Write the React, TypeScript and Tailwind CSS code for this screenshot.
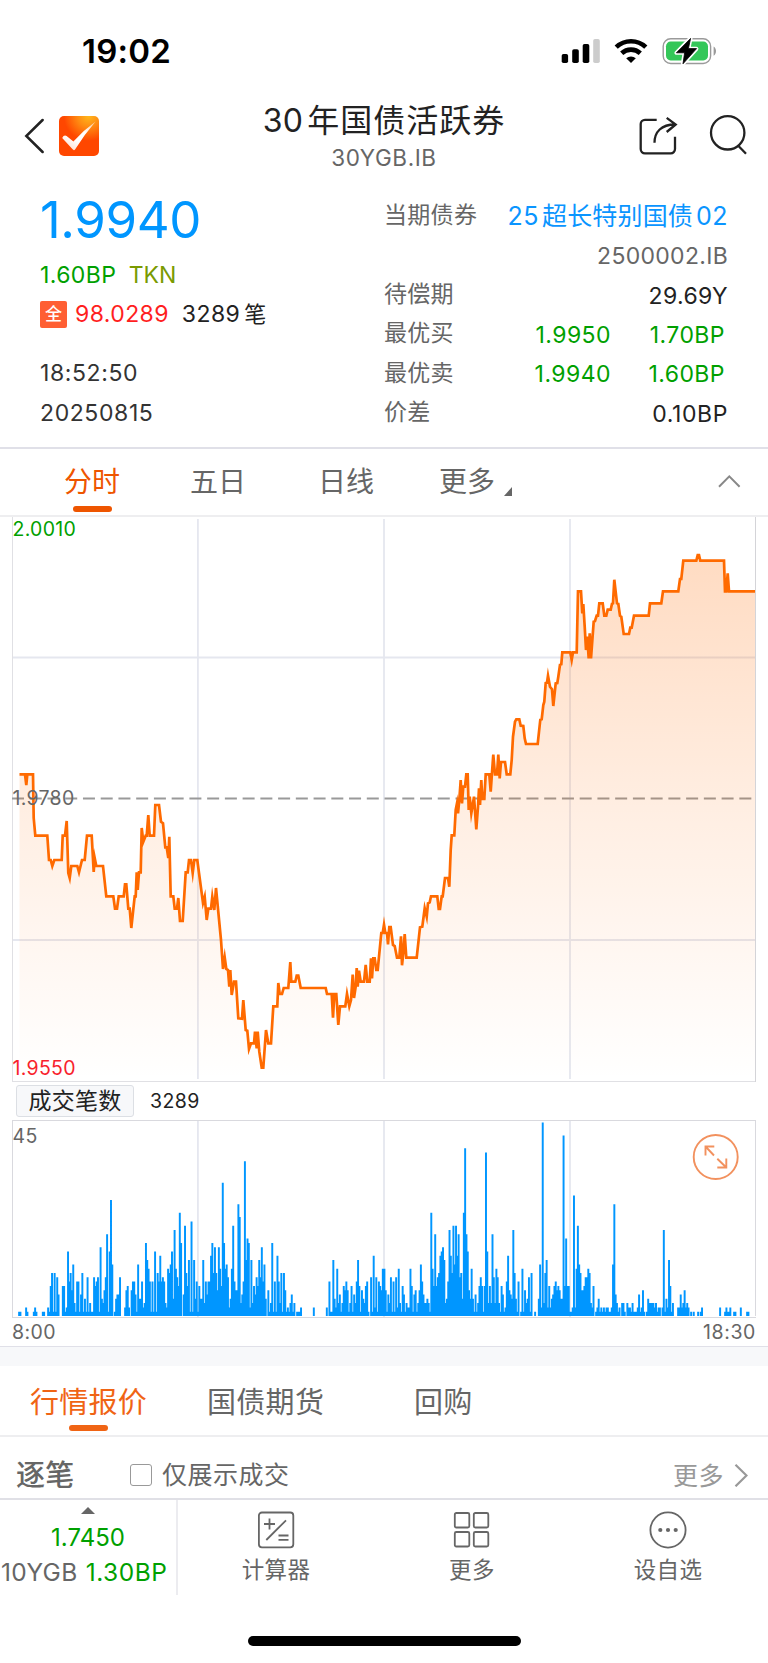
import React from "react";

const LINE =
  "19.5,774.3 25,774.3 26.3,785 27.3,774.3 33,774.3 33.7,818 35.3,835.7 47.3,835.7 49,860 50.7,860 52.3,866 54.3,860 61.7,860 62.7,835.7 65,835.7 66.7,821 68.3,873 69.7,878 71.3,866 77.3,866 79,872.3 82,860 84.7,860 87,835.7 91.7,835.7 93.7,872 94.7,858 96.3,866 103,866 106.3,896.3 113.3,896.3 115,908.7 117,908.7 118.7,896.3 123.7,896.3 125,884.3 126.3,884.3 128.3,908.7 129.7,908.7 131.3,928 134.7,896.3 135.7,896.3 136.7,872.3 137.7,890 139,872.3 140.7,872.3 141.7,828 143.3,841.7 145.7,835.7 146.7,835.7 148.3,815 149.7,835.7 154,835.7 155.3,805 159,805 161,821.7 163,823.3 165.3,847.3 166.7,847.3 168.3,858 169.3,836.7 170.7,896.3 173.3,896.3 174.7,908.7 177,908.7 178.3,898 180,921 182.7,921 185.7,872.3 187.7,872.3 189,860 191,860 192.7,873 194.3,860 197.3,860 199,873 203,903 204.7,896.7 206.7,920 208.3,908.7 211,908.7 212.3,896.7 214.3,910 216,888 221,940 223,969 224.7,957.3 226.3,969 228,970 229.3,986.7 230.3,970 231.7,995 234,981.7 236,981.7 238.3,1018.3 242,1018.7 243.3,1000 245.7,1030 247.3,1030.7 249,1049 251,1043.3 254,1043.3 255,1031.7 256.7,1048.3 257.7,1031.7 259.3,1051.7 261.7,1067.7 263.3,1067.7 266,1030 268.3,1043.3 271,1043.3 273.3,1006.3 277.3,1006.3 278.3,983 279.7,994 282,994 283.7,988 288.3,988 290.3,962 291.3,981.7 295.3,981.7 296.7,975.7 298.3,975.7 300.7,988 325.7,988 327,994 331.7,994 333,1017.7 334.3,994 336.3,994 338.3,1025 340,1006.3 345.3,1006.3 347,994 349.3,1006.3 351,1000 352.7,974.7 354,998 355.7,986.7 356.7,968 357.7,986.7 359,970.7 360.7,981.7 364,981.7 365.7,965 367.3,981.7 369.7,981.7 371,958.3 372,978.3 373.3,958.3 374.7,958.3 376.3,970 377.7,970 381.3,933 382.7,933 384,924.7 385.3,933 387,933 388,944.3 389.3,927 390.7,927 393,945 394.7,946 397,957.7 399.3,957.7 401,936.3 402,965.3 403.3,953.3 404.7,934 406.3,957.7 416.7,957.7 420,927.3 422.3,926.7 424.7,908.3 426.7,916.7 428,903.3 429.7,902.3 431,896.3 437.3,896.3 438.7,909 440,909 441.7,896.3 442.7,896.3 445,878 448,878 449.3,886.7 450.7,850 451.7,835.3 454.3,835.3 455.7,810 457,803.3 458,813.3 459.3,800 460.7,780 462,803.3 463.3,786.7 465,786.7 466.3,774.3 467.7,774.3 468.7,810 469.7,796.7 471.3,813.3 472.7,805 474,796.7 476.3,829.3 478,806.7 479,788.3 480,805 481.3,780 482.3,799 484.3,799 485.7,774.3 489.3,774.3 490.7,791.7 492.3,768.3 493.3,754.7 495,774.3 497,774.3 498.3,754.7 499.7,778.3 501,762 505,762 506.7,774.3 510.3,774.3 511.7,760 513,736.7 515,721.7 516.3,719.3 519.3,719.3 520.7,725.7 523.3,726 524.7,738.3 526,744 537.7,744 540.3,719.7 541.7,719.3 543.3,705 544.3,701.7 545.7,683 547,682.7 548,675.7 550,686.7 552,689.3 553.3,706 555.7,683.3 557.3,683 558.3,676.7 560,664.7 561.3,664.3 562.3,652.3 570.3,652.3 571.7,660 573,652.3 576.7,652.3 578,591.3 581,591.3 582.3,613.3 583.3,604 584.7,626.7 586,650 587.3,636.7 588.7,658.3 589.7,633.3 591,658.3 593.7,621.7 595,621 596.7,615.7 598,615.7 599.3,603.3 602.7,603.3 604.3,615.7 606.3,615.7 607.7,609.7 610.7,609.7 612,603.7 613,603.3 614.3,579.7 617,603.3 618.3,603.7 620,615.7 621.3,616.7 623.7,634 629,634 630.3,627.7 631.7,627.7 634,615.7 648.7,615.7 650,603.3 661.3,603.3 663,591.3 678.3,591.3 680,579 681.3,579 683.3,560.7 696.3,560.7 697.7,555 699,555 700.3,560.7 724,560.7 725,591.3 726.3,591.3 727.7,573.3 729,591.3 755,591.3";

/* Runs of per-interval trade counts: [x of the first bar, counts]. */
const VOLUME: [number, number[]][] = [
  [19, [1, 1]],
  [26, [2, 1]],
  [33.7, [1, 2, 1]],
  [42.7, [1, 1]],
  [48, [2, 1, 7, 10, 1, 10, 1, 9, 5]],
  [62.7, [7, 7, 1, 2, 15, 8, 10, 6, 12, 3, 1, 8, 8, 1, 5, 10, 1, 4, 1, 9, 1, 3, 1, 1, 9, 7, 8, 9, 1, 16, 4, 3, 6, 9, 19, 1, 15, 27, 12]],
  [114.7, [1, 4, 5, 5, 9]],
  [125, [2, 6, 7, 2, 0, 6, 8, 8, 5, 1, 12, 4, 4, 8, 2, 3, 17, 13, 11, 8, 1, 8, 1, 15, 1, 10, 8, 14, 8, 9, 8, 3, 2, 11, 10, 12, 15, 4, 20, 11, 9, 7, 24, 17, 0, 5, 21, 10, 7, 13, 1, 22, 1, 13, 4, 8, 1, 7, 4, 4, 13, 3, 8, 5, 8, 8, 14, 17, 10, 16, 10, 6, 16, 11, 7, 31, 17, 11, 12, 9, 2, 4, 11, 21, 8, 6, 6, 26, 23, 3, 5, 8, 36, 13, 18, 17, 2, 13, 3, 7, 5, 9, 7, 13, 9, 16, 8, 12, 4, 0, 6, 1, 3, 17, 1, 8, 1, 14, 8, 3, 10, 1, 10, 6, 1, 2, 1, 3, 5, 1, 3]],
  [297, [1, 1, 1, 2]],
  [313.7, [2]],
  [326.7, [2, 0, 8, 1, 1, 13, 4, 2, 11, 3, 5, 1, 3, 7, 6, 8, 6, 1, 3, 7, 1, 5, 3, 8, 13, 7, 1, 6, 4, 3, 7, 8, 1, 0, 9, 1, 14, 2, 9, 1, 8, 7, 6, 11]],
  [384.3, [11, 6, 1, 5, 3, 9, 1, 8, 1, 9, 2, 11, 3, 1, 7, 5, 1, 3, 2, 2, 11, 7, 1, 5, 6, 1, 3, 6, 12, 8, 5, 3, 3, 4, 3, 1, 24, 11, 7, 19, 7, 9, 10, 14, 15, 16, 13, 3, 4, 8, 20, 14, 10, 21, 12, 21, 14, 19, 9, 10, 4, 24, 39, 19, 15, 6, 4, 11, 4, 1, 5, 1, 3, 7, 9, 7, 1, 7, 38, 15, 3, 7, 3, 19, 9, 3, 11, 9, 3, 1, 7, 5, 1, 2, 8, 14, 6, 5, 4, 20, 10, 4, 1, 8, 0, 1, 11, 1, 6, 3, 4, 9, 1, 10]],
  [535, [1]],
  [538.7, [4, 12, 2, 45, 3, 10, 13, 2, 7, 2, 4, 5, 7, 8, 6, 7, 6, 4, 4, 42, 7, 18, 7, 7, 1, 1, 2, 28, 2, 11, 21, 12, 10, 6, 6, 7, 9, 9, 11, 10, 3, 2, 7, 0, 1, 2, 4, 1, 2, 1, 2, 1, 2, 2, 1, 1, 2, 12, 26, 5, 3, 1, 2, 0, 3, 3, 1, 0, 3, 2, 2, 1, 3, 1, 1, 1, 2, 5, 1, 2, 6, 1, 0, 1, 4, 3, 3, 3, 3, 2, 3, 1, 2, 2, 0, 2, 20, 1, 4, 2, 13, 7, 1, 3]],
  [678, [2, 2, 5, 2, 3, 6, 2, 3, 2, 0, 1, 0, 1]],
  [698, [1, 0, 1, 2]],
  [720, [2]],
  [725, [1, 2, 1, 1, 2]],
  [734, [1, 1]],
  [740.7, [2]],
  [747, [1, 1]],
];

const volumePath = VOLUME.flatMap(([start, counts]) =>
  counts.map((c, i) =>
    c ? `M${(start + i * 1.302 - 0.85).toFixed(2)} 1316v${(-c * 4.3).toFixed(1)}h1.95V1316z` : ""
  )
).join("");

function StatusIcons() {
  return (
    <svg width="160" height="32" viewBox="560 35 160 32">
      <g>
        <rect x="561.7" y="54" width="6.4" height="9" rx="1.8" />
        <rect x="572.2" y="49.3" width="6.6" height="13.7" rx="1.8" />
        <rect x="582.7" y="44" width="6.6" height="19" rx="1.8" />
        <rect x="593.2" y="39" width="6.6" height="24" rx="1.8" fill="#ccc" />
      </g>
      <g fill="none" stroke="#000" strokeWidth="4.6">
        <path d="M616.2 47.2a21.4 21.4 0 0 1 29.6 0" />
        <path d="M621.7 53.3a13.6 13.6 0 0 1 18.600 0" />
      </g>
      <path d="M626.2 58.3a7 7 0 0 1 9.600 0l-4.800 4.800z" />
      <rect x="663.2" y="38.7" width="47.4" height="24.8" rx="7.5" fill="#fff" stroke="#9a9a9a" strokeWidth="1.4" />
      <rect x="666" y="41.6" width="42" height="18.8" rx="4.6" fill="#34c759" />
      <path d="M713.6 46.6c3.2 1.6 3.2 7.6 0 9.2z" fill="#9a9a9a" />
      <path d="M690.6 38.2 676.4 52.8h8.2l-1.8 11 13.6-15h-8z" stroke="#fff" strokeWidth="4" strokeLinejoin="round" />
      <path d="M690.6 38.4 676.4 52.8h8.2l-1.6 11 13.6-15.2h-8.2z" stroke="#000" strokeWidth=".8" strokeLinejoin="round" />
    </svg>
  );
}

function Logo() {
  return (
    <svg className="mt-[15px] ml-[15.3px]" width="40" height="40" viewBox="0 0 40 40">
      <defs>
        <radialGradient id="logoBg" cx=".74" cy="0" r=".62">
          <stop offset="0" stopColor="#ffb81c" />
          <stop offset=".45" stopColor="#ff8a12" />
          <stop offset="1" stopColor="#ff4700" />
        </radialGradient>
        <linearGradient id="logoTick" x1=".3" y1="1" x2="1" y2="0">
          <stop offset="0" stopColor="#ffe3d6" />
          <stop offset=".3" stopColor="#fff" />
          <stop offset=".6" stopColor="#fff" />
          <stop offset="1" stopColor="#ffc28a" />
        </linearGradient>
      </defs>
      <rect width="40" height="40" rx="5" fill="url(#logoBg)" />
      <path d="M3.2 22 Q5 18.4 7.6 20 L14.4 25.4 Q25 14 36.6 5.6 Q25.5 18.5 16.2 33.2 Q15 35 13.6 33.3z" fill="url(#logoTick)" />
    </svg>
  );
}

function Header() {
  return (
    <header className="flex h-[75px] justify-between text-[#222]">
      <div className="flex w-[200px] items-start">
        <svg className="mt-[17px] ml-[24px]" width="20" height="36" viewBox="24 118 20 36" fill="none" stroke="currentColor" strokeWidth="2.5">
          <path d="M42.600 120 26.300 136l16.300 16" strokeLinecap="round" />
        </svg>
        <Logo />
      </div>
      <div className="flex flex-col items-center pt-px">
        <h1 className="flex text-[32px] leading-[38px] tracking-[1px]">
          <span className="mr-[4px] tracking-[0.3px]">30</span>年国债活跃券
        </h1>
        <div className="text-[22.5px] leading-[36px] tracking-[0.6px] text-[#666]">30YGB.IB</div>
      </div>
      <div className="flex w-[200px] items-start justify-end pr-5">
        <svg className="mt-[13px]" width="110" height="44" viewBox="638 114 110 44" fill="none" stroke="currentColor" strokeWidth="2.3">
          <path d="M656.700 119.800H645a4.300 4.300 0 0 0-4.300 4.300v25a4.300 4.300 0 0 0 4.300 4.300h25.700a4.300 4.300 0 0 0 4.300-4.300v-12.400" />
          <path d="M654.500 142.800c0-11 7-18.300 20.500-18.300M666.700 117.800l9 6.700-9 7.500" />
          <circle cx="727.700" cy="132.800" r="16.700" />
          <path d="m738 145.500 8 8.200" />
        </svg>
      </div>
    </header>
  );
}

function Detail({ label, children }: { label: string; children: React.ReactNode }) {
  return (
    <div className="flex h-[39.5px] items-center justify-between">
      <span className="pb-[3px] text-[23px] tracking-[0.3px] text-[#666]">{label}</span>
      {children}
    </div>
  );
}

function Best({ price, bp }: { price: string; bp: string }) {
  return (
    <span className="flex gap-[36px] pr-[3px] tracking-[0.45px] text-[#00a000]">
      <span>{price}</span>
      <span className="w-[78px] text-right">{bp}</span>
    </span>
  );
}

function Quote() {
  return (
    <section className="flex h-[271px] text-[23px] leading-[25px] tracking-[0.4px] text-[#222]">
      <div className="w-[384px] pl-[40px]">
        <div className="text-[51px] leading-[87px] tracking-[-0.4px] text-[#0096ff]">1.9940</div>
        <div className="flex gap-[12.5px]">
          <span className="text-[#00a000]">1.60BP</span>
          <span className="tracking-[-0.1px] text-[#7a9a01]">TKN</span>
        </div>
        <div className="flex h-[53px] items-center">
          <span className="flex h-[27px] w-[27px] items-center justify-center rounded-[2px] bg-[#ff5f33] text-[17px] font-medium tracking-normal text-white">全</span>
          <span className="ml-[8px] text-[#ff1e1e]">98.0289</span>
          <span className="ml-[13px]">3289</span>
          <span className="ml-[4px] text-[22px]">笔</span>
        </div>
        <div className="mt-[13px] leading-[39px] tracking-[0.6px] text-[#333]">18:52:50</div>
        <div className="leading-[40px] tracking-[0.6px] text-[#333]">20250815</div>
      </div>
      <div className="w-[344px] pt-[21px]">
        <Detail label="当期债券">
          <span className="flex text-[25px] tracking-[0.5px] text-[#0a95ff]">
            25<span className="mx-[3px] tracking-[0.15px]">超长特别国债</span>02
          </span>
        </Detail>
        <Detail label="">
          <span className="pt-px tracking-[0.3px] text-[#666]">2500002.IB</span>
        </Detail>
        <Detail label="待偿期">
          <span className="pt-px">29.69Y</span>
        </Detail>
        <Detail label="最优买">
          <Best price="1.9950" bp="1.70BP" />
        </Detail>
        <Detail label="最优卖">
          <Best price="1.9940" bp="1.60BP" />
        </Detail>
        <Detail label="价差">
          <span className="tracking-[0.6px]">0.10BP</span>
        </Detail>
      </div>
    </section>
  );
}

function PeriodTabs() {
  return (
    <nav className="flex h-[70px] border-t-2 border-b-2 border-t-[#e0e0e8] border-b-[#eeeef0] pt-[14px] text-[28px] leading-[39px] text-[#666]">
      <div className="ml-[64px] flex w-[56px] flex-col items-center text-[#ee5500]">
        分时
        <span className="mt-[4px] h-[6px] w-[39px] rounded-[3px] bg-[#ee5500]" />
      </div>
      <div className="ml-[70px] w-[56px]">五日</div>
      <div className="ml-[72px] w-[56px]">日线</div>
      <div className="ml-[65px] flex w-[74px]">
        更多
        <svg className="mt-[24px] ml-[9px]" width="8" height="9" viewBox="0 0 8 9">
          <path d="M8 0v9H0z" fill="#666" />
        </svg>
      </div>
      <svg className="mt-[10px] ml-[204px]" width="24" height="16" viewBox="717 473 24 16" fill="none" stroke="#888" strokeWidth="2">
        <path d="m719 486.700 10.300-10.400 10.300 10.400" />
      </svg>
    </nav>
  );
}

function PriceChart() {
  return (
    <section className="relative h-[565px] text-[19.5px] leading-[20px] tracking-[0.3px]">
      <svg width="768" height="565" viewBox="0 517 768 565" fill="none">
        <defs>
          <linearGradient id="area" x1="0" y1="554" x2="0" y2="1080" gradientUnits="userSpaceOnUse">
            <stop offset="0" stopColor="#ff6a00" stopOpacity=".24" />
            <stop offset=".5" stopColor="#ff6a00" stopOpacity=".11" />
            <stop offset="1" stopColor="#ff6a00" stopOpacity="0" />
          </linearGradient>
        </defs>
        <path d="M197.900 519v560M384 519v560M570 519v560M12 657.500h743M12 940h743" stroke="#e5e7ef" strokeWidth="1.800" />
        <path d="M12.500 517v565M12 1081.500h744" stroke="#e0e0e4" />
        <path d="M755.500 517v565" stroke="#d4d4d8" />
        <path d="M12 798.500h740" stroke="#999" strokeWidth="1.900" strokeDasharray="12 5.740" />
        <polygon points={`19.5,1080 ${LINE} 755,1080`} fill="url(#area)" />
        <polyline points={LINE} stroke="#ff6a00" strokeWidth="2.700" strokeLinejoin="miter" strokeMiterlimit="8" />
      </svg>
      <span className="absolute top-[2px] left-[12.5px] text-[#00a000]">2.0010</span>
      <span className="absolute top-[271px] left-[12.5px] text-[#666]">1.9780</span>
      <span className="absolute top-[541px] left-[12.5px] text-[#f8222c]">1.9550</span>
    </section>
  );
}

function VolumeChart() {
  return (
    <section className="text-[19.5px] tracking-[0.4px] text-[#666]">
      <div className="flex h-[38px] items-center pl-[16px] text-[#222]">
        <span className="flex h-[32px] w-[118px] items-center justify-center rounded-[3px] border border-[#dcdfe4] bg-[#f7f8fa] pt-px text-[23px] tracking-[0.3px]">成交笔数</span>
        <span className="ml-[16px] pt-[2px]">3289</span>
      </div>
      <div className="relative h-[198px]">
        <svg width="768" height="198" viewBox="0 1120 768 198" fill="none">
          <path d="M197.900 1121v196M384 1121v196M570 1121v196" stroke="#e5e7ef" strokeWidth="1.800" />
          <path d="M12.500 1120v198M12 1120.500h744M12 1317.500h744M755.500 1120v196" stroke="#d9d9de" />
          <path d={volumePath} fill="#0096ff" />
          <g stroke="#f2915e" strokeWidth="1.900">
            <circle cx="715.700" cy="1157" r="22" />
            <path d="M705.500 1155.500v-9h8.800M705.500 1146.500l8.500 9M726.300 1158.500v9h-9M726.300 1167.500l-9-8.800" />
          </g>
        </svg>
        <span className="absolute top-[6px] left-[12.5px] leading-[20px]">45</span>
      </div>
      <div className="flex h-[28px] items-center justify-between pt-[2px] pr-[12px] pl-[12px]">
        <span>8:00</span>
        <span className="tracking-[0.6px]">18:30</span>
      </div>
      <div className="h-[20px] border-t border-[#e0e0e8] bg-[#f7f8fa]" />
    </section>
  );
}

function MarketTabs() {
  return (
    <nav className="flex h-[71px] border-b-2 border-[#eeeef0] pt-[17px] text-[29px] leading-[39px] tracking-[0.3px] text-[#666]">
      <div className="ml-[30px] flex w-[117px] flex-col items-center text-[#f06414]">
        行情报价
        <span className="mt-[3px] h-[6px] w-[39px] rounded-[3px] bg-[#f06414]" />
      </div>
      <div className="ml-[60px] w-[118px]">国债期货</div>
      <div className="ml-[89px]">回购</div>
    </nav>
  );
}

function TickHeader() {
  return (
    <div className="flex h-[61px] pt-[18px] text-[25px] leading-[40px] tracking-[0.5px] text-[#666]">
      <span className="ml-[16px] w-[114px] pt-px text-[29px] font-medium tracking-[0.3px]">逐笔</span>
      <span className="mt-[9px] h-[22px] w-[22px] rounded-[3px] border-[1.5px] border-[#999]" />
      <span className="ml-[10px] flex-1">仅展示成交</span>
      <span className="pt-px text-[#999]">更多</span>
      <svg className="mt-[8px] mr-[20px] ml-[9px]" width="15" height="24" viewBox="733 1463 15 24" fill="none" stroke="#999" strokeWidth="2.2">
        <path d="m735.500 1464.700 11 10.800-11 10.800" />
      </svg>
    </div>
  );
}

function NavItem({ label, children }: { label: string; children: React.ReactNode }) {
  return (
    <div className="flex flex-1 flex-col items-center pt-[10px] text-[22.5px] leading-[30px] tracking-[0.4px]">
      <svg width="40" height="40" viewBox="0 0 40 40" fill="none" stroke="#666" strokeWidth="1.800">
        {children}
      </svg>
      <span className="mt-[5px]">{label}</span>
    </div>
  );
}

function BottomNav() {
  return (
    <footer className="flex h-[165px] flex-col items-center border-t-2 border-[#e0e0e6] text-[#666]">
      <div className="flex h-[95px] w-full">
        <div className="flex w-[178px] flex-col items-center border-r-2 border-[#ececf0] text-[24.5px] leading-[35px]">
          <svg className="mt-[7px]" width="14" height="7" viewBox="0 0 14 7">
            <path d="M7 0l7 7H0z" fill="#666" />
          </svg>
          <span className="mt-[6px] text-[24px] text-[#00a000]">1.7450</span>
          <span className="flex w-full pl-px">
            <span className="tracking-[0.4px]">10YGB</span>
            <span className="ml-[8px] tracking-[0.5px] text-[#00a000]">1.30BP</span>
          </span>
        </div>
        <div className="mr-[2px] flex flex-1">
          <NavItem label="计算器">
            <rect x="2.900" y="2.500" width="34.400" height="34.800" rx="3" />
            <path d="M8 14h11M13.500 8.500v11M10.300 30 30 10.300M22.500 25.500h10M22.500 29.800h10" />
          </NavItem>
          <NavItem label="更多">
            <rect x="2.800" y="3" width="14.500" height="14.500" rx="1.500" />
            <rect x="21.800" y="3" width="14.500" height="14.500" rx="1.500" />
            <rect x="2.800" y="22" width="14.500" height="14.500" rx="1.500" />
            <rect x="21.800" y="22" width="14.500" height="14.500" rx="1.500" />
          </NavItem>
          <NavItem label="设自选">
            <circle cx="20" cy="20" r="17.600" />
            <g fill="#666" stroke="none">
              <circle cx="12.300" cy="20" r="2.100" />
              <circle cx="20" cy="20" r="2.100" />
              <circle cx="27.700" cy="20" r="2.100" />
            </g>
          </NavItem>
        </div>
      </div>
      <div className="mt-[41px] h-[10px] w-[273px] rounded-full bg-black" />
    </footer>
  );
}

export default function App() {
  return (
    <main className="h-[1663px] w-[768px] overflow-hidden bg-white whitespace-nowrap font-['Inter','Noto_Sans_CJK_SC',sans-serif]">
      <div className="flex h-[101px] items-center justify-between pr-[48px] pl-[82px]">
        <span className="pt-[2px] text-[33px] font-semibold tracking-[0.2px]">19:02</span>
        <StatusIcons />
      </div>
      <Header />
      <Quote />
      <PeriodTabs />
      <PriceChart />
      <VolumeChart />
      <MarketTabs />
      <TickHeader />
      <BottomNav />
    </main>
  );
}
